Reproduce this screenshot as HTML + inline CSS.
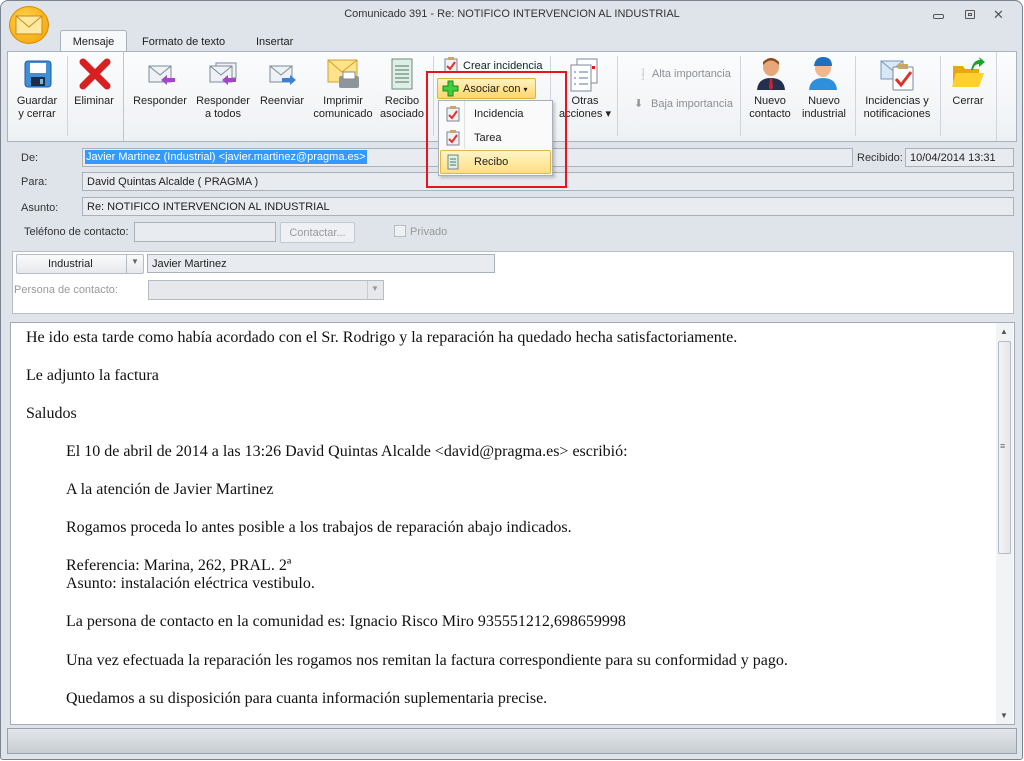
<!DOCTYPE html>
<html><head><meta charset="utf-8"><style>
*{margin:0;padding:0;box-sizing:border-box}
body{width:1024px;height:761px;background:#fff;font-family:"Liberation Sans",sans-serif;font-size:11px;color:#1e1e1e;position:relative;overflow:hidden}
.a{position:absolute}
.win{left:0;top:0;width:1023px;height:760px;background:#dfe4ea;border:1px solid #7a8491;border-radius:8px 8px 3px 3px}
.lbl{position:absolute;font-size:11px;color:#333;white-space:nowrap}
.fld{position:absolute;background:#e8ebef;border:1px solid #a9b1bb;height:19px;font-size:11px;padding:3px 4px;white-space:nowrap}
.btxt{position:absolute;text-align:center;font-size:11px;line-height:13px;color:#222;white-space:nowrap}
.sep{position:absolute;width:1px;background:#cfd5dc;top:56px;height:80px}
.p{position:absolute;font-family:"Liberation Serif",serif;font-size:16px;color:#111;white-space:nowrap}
</style></head><body>
<div class="a win"></div>
<div class="a" style="left:9px;top:6px;width:40px;height:38px;border-radius:50%;background:radial-gradient(circle at 40% 35%,#ffd24a,#f5a000);border:1px solid #d88a00"></div>
<svg class="a" style="left:15px;top:15px" width="28" height="20"><rect x="1" y="1" width="26" height="18" fill="#ffe9a0" stroke="#c98a10"/><path d="M1 1 L14 12 L27 1" fill="none" stroke="#c98a10"/></svg>
<div class="a" style="left:0;top:8px;width:1024px;text-align:center;font-size:11px;color:#333">Comunicado 391 - Re: NOTIFICO INTERVENCION AL INDUSTRIAL</div>
<div class="a" style="left:933px;top:14px;width:11px;height:5px;border:1px solid #555;border-radius:2px"></div>
<div class="a" style="left:965px;top:10px;width:10px;height:9px;border:1px solid #555;border-radius:1px"></div>
<div class="a" style="left:968px;top:13px;width:4px;height:3px;border:1px solid #555"></div>
<div class="a" style="left:993px;top:7px;font-size:13px;color:#555">✕</div>
<div class="a" style="left:60px;top:30px;width:67px;height:22px;background:#f6f8fa;border:1px solid #aab3bd;border-bottom:none;border-radius:3px 3px 0 0;text-align:center;padding-top:5px">Mensaje</div>
<div class="a" style="left:142px;top:36px">Formato de texto</div>
<div class="a" style="left:256px;top:36px">Insertar</div>
<div class="a" style="left:7px;top:51px;width:1010px;height:91px;background:linear-gradient(#fbfcfd,#eef1f4);border:1px solid #aab3bd"></div>
<div class="a" style="left:996px;top:52px;width:1px;height:89px;background:#cfd5dc"></div>
<div class="sep" style="left:67px"></div>
<div class="sep" style="left:123px;top:52px;height:89px;background:#bfc6ce"></div>
<div class="sep" style="left:433px"></div>
<div class="sep" style="left:550px"></div>
<div class="sep" style="left:617px"></div>
<div class="sep" style="left:740px"></div>
<div class="sep" style="left:855px"></div>
<div class="sep" style="left:940px"></div>
<svg class="a" style="left:24px;top:60px" width="28" height="28"><rect x="1" y="1" width="26" height="26" rx="3" fill="#3e8fd8" stroke="#1f5c9a"/><rect x="6" y="3" width="16" height="10" fill="#fff"/><rect x="7" y="17" width="14" height="9" fill="#1c2e45"/><rect x="16" y="19" width="3" height="5" fill="#7fb4e0"/></svg>
<svg class="a" style="left:79px;top:58px" width="32" height="32"><path d="M4 4 L28 28 M28 4 L4 28" stroke="#d92020" stroke-width="7" stroke-linecap="round"/></svg>
<svg class="a" style="left:147px;top:60px" width="30" height="28"><rect x="2" y="6" width="22" height="16" fill="#eef2f6" stroke="#7d8a98"/><path d="M2 6 L13 15 L24 6" fill="none" stroke="#7d8a98"/><path d="M14 20 L20 15 L20 18 L28 18 L28 22 L20 22 L20 25 Z" fill="#a245c6"/></svg>
<svg class="a" style="left:208px;top:60px" width="32" height="28"><rect x="8" y="3" width="20" height="15" fill="#eef2f6" stroke="#7d8a98"/><rect x="2" y="6" width="22" height="16" fill="#eef2f6" stroke="#7d8a98"/><path d="M2 6 L13 15 L24 6" fill="none" stroke="#7d8a98"/><path d="M14 20 L20 15 L20 18 L28 18 L28 22 L20 22 L20 25 Z" fill="#a245c6"/></svg>
<svg class="a" style="left:268px;top:60px" width="30" height="28"><rect x="2" y="6" width="22" height="16" fill="#eef2f6" stroke="#7d8a98"/><path d="M2 6 L13 15 L24 6" fill="none" stroke="#7d8a98"/><path d="M28 20 L22 15 L22 18 L14 18 L14 22 L22 22 L22 25 Z" fill="#3b7fd6"/></svg>
<svg class="a" style="left:327px;top:58px" width="34" height="34"><rect x="1" y="2" width="29" height="22" fill="#ffe38a" stroke="#d0a030"/><path d="M1 2 L15 14 L30 2" fill="none" stroke="#d0a030"/><rect x="12" y="18" width="20" height="12" rx="2" fill="#8d959e"/><rect x="16" y="14" width="12" height="7" fill="#fff" stroke="#888"/></svg>
<svg class="a" style="left:391px;top:58px" width="22" height="32"><rect x="1" y="1" width="20" height="30" fill="#dfeee6" stroke="#6a8d7a"/><path d="M4 8h14M4 12h14M4 16h14M4 20h14M4 24h14" stroke="#4b7560"/></svg>
<div class="btxt" style="left:14px;top:95px;width:46px">Guardar<br>y cerrar</div>
<div class="btxt" style="left:72px;top:95px;width:44px">Eliminar</div>
<div class="btxt" style="left:132px;top:95px;width:56px">Responder</div>
<div class="btxt" style="left:194px;top:95px;width:58px">Responder<br>a todos</div>
<div class="btxt" style="left:256px;top:95px;width:52px">Reenviar</div>
<div class="btxt" style="left:312px;top:95px;width:62px">Imprimir<br>comunicado</div>
<div class="btxt" style="left:378px;top:95px;width:48px">Recibo<br>asociado</div>
<svg class="a" style="left:444px;top:57px" width="14" height="16"><rect x="1" y="2" width="12" height="13" fill="#eef2f8" stroke="#7a8798"/><path d="M3 9 L6 12 L11 5" stroke="#e0322a" stroke-width="2" fill="none"/><rect x="4" y="0" width="6" height="3" fill="#c9a866"/></svg>
<div class="a" style="left:463px;top:60px">Crear incidencia</div>
<svg class="a" style="left:569px;top:58px" width="32" height="34"><rect x="8" y="1" width="20" height="24" fill="#fff" stroke="#7b8898"/><rect x="2" y="7" width="20" height="26" fill="#fff" stroke="#7b8898"/><path d="M5 14h2M10 14h9M5 20h2M10 20h9M5 26h2M10 26h9" stroke="#5a7aa0"/><rect x="23" y="8" width="3" height="3" fill="#d02020"/></svg>
<div class="btxt" style="left:556px;top:95px;width:58px">Otras<br>acciones ▾</div>
<div class="a" style="left:636px;top:68px;color:#999">❕</div>
<div class="a" style="left:652px;top:68px;color:#8a8f96">Alta importancia</div>
<div class="a" style="left:634px;top:97px;color:#999">⬇</div>
<div class="a" style="left:651px;top:98px;color:#8a8f96">Baja importancia</div>
<svg class="a" style="left:755px;top:56px" width="32" height="36"><ellipse cx="16" cy="11" rx="8" ry="9" fill="#e6a878"/><path d="M8 9 Q16 0 24 9 L24 6 Q16 -2 8 6Z" fill="#8a4a20"/><path d="M2 34 Q3 22 16 22 Q29 22 30 34Z" fill="#25304f"/><path d="M15 22 L17 22 L18 32 L16 34 L14 32Z" fill="#d0202a"/></svg>
<svg class="a" style="left:807px;top:56px" width="32" height="36"><ellipse cx="16" cy="12" rx="8" ry="9" fill="#f0b890"/><path d="M7 10 Q8 1 16 1 Q25 1 25 10Z" fill="#1f6fbf"/><path d="M2 34 Q3 22 16 22 Q29 22 30 34Z" fill="#2e8fdc"/></svg>
<div class="btxt" style="left:746px;top:95px;width:48px">Nuevo<br>contacto</div>
<div class="btxt" style="left:800px;top:95px;width:48px">Nuevo<br>industrial</div>
<svg class="a" style="left:879px;top:57px" width="36" height="34"><rect x="2" y="4" width="22" height="18" fill="#d8e8f6" stroke="#7a96b8"/><path d="M2 4 L13 13 L24 4" fill="none" stroke="#7a96b8"/><rect x="14" y="10" width="20" height="23" rx="1" fill="#fff" stroke="#7a8798"/><rect x="19" y="7" width="10" height="5" fill="#c9a866"/><path d="M17 22 L22 28 L32 15" stroke="#e0322a" stroke-width="3" fill="none"/></svg>
<div class="btxt" style="left:860px;top:95px;width:74px">Incidencias y<br>notificaciones</div>
<svg class="a" style="left:951px;top:56px" width="34" height="34"><path d="M2 10 L12 10 L14 13 L28 13 L28 31 L2 31Z" fill="#e8a810"/><path d="M5 17 L33 17 L28 31 L1 31Z" fill="#ffd030"/><path d="M20 14 Q22 4 29 4 L28 1 L34 6 L28 11 L28 8 Q23 8 22 14Z" fill="#1aa52a"/></svg>
<div class="btxt" style="left:945px;top:95px;width:46px">Cerrar</div>
<div class="lbl" style="left:21px;top:152px">De:</div>
<div class="fld" style="left:82px;top:148px;width:771px;padding:2px 2px"><span style="background:#3399ff;color:#fff;padding:1px 1px">Javier Martinez (Industrial) &lt;javier.martinez@pragma.es&gt;</span></div>
<div class="lbl" style="left:857px;top:152px">Recibido:</div>
<div class="fld" style="left:905px;top:148px;width:109px">10/04/2014 13:31</div>
<div class="lbl" style="left:21px;top:176px">Para:</div>
<div class="fld" style="left:82px;top:172px;width:932px">David Quintas Alcalde ( PRAGMA )</div>
<div class="lbl" style="left:21px;top:202px">Asunto:</div>
<div class="fld" style="left:82px;top:197px;width:932px">Re: NOTIFICO INTERVENCION AL INDUSTRIAL</div>
<div class="lbl" style="left:24px;top:226px">Teléfono de contacto:</div>
<div class="fld" style="left:134px;top:222px;width:142px;height:20px"></div>
<div class="a" style="left:280px;top:222px;width:75px;height:21px;border:1px solid #c4cad1;border-radius:2px;color:#999;padding-top:4px;text-align:center;background:#eef0f3">Contactar...</div>
<div class="a" style="left:394px;top:225px;width:12px;height:12px;border:1px solid #b5bcc4;background:#eef0f2"></div>
<div class="lbl" style="left:410px;top:226px;color:#999">Privado</div>
<div class="a" style="left:12px;top:251px;width:1002px;height:63px;background:#fff;border:1px solid #b7bec7"></div>
<div class="a" style="left:16px;top:254px;width:128px;height:20px;border:1px solid #b5bcc4;border-radius:2px;background:linear-gradient(#fafbfc,#e6e9ed)"></div>
<div class="a" style="left:126px;top:255px;width:1px;height:18px;background:#b5bcc4"></div>
<div class="a" style="left:48px;top:258px">Industrial</div>
<div class="a" style="left:131px;top:257px;font-size:8px;color:#666">▼</div>
<div class="fld" style="left:147px;top:254px;width:348px">Javier Martinez</div>
<div class="lbl" style="left:14px;top:284px;color:#999">Persona de contacto:</div>
<div class="a" style="left:148px;top:280px;width:236px;height:20px;border:1px solid #b5bcc4;background:#e6e8eb"></div>
<div class="a" style="left:367px;top:281px;width:1px;height:18px;background:#c8ccd1"></div>
<div class="a" style="left:371px;top:284px;font-size:8px;color:#999">▼</div>
<div class="a" style="left:10px;top:322px;width:1005px;height:403px;background:#fff;border:1px solid #a3acb6"></div>
<div class="a" style="left:996px;top:323px;width:17px;height:401px;background:#f2f3f5"></div>
<div class="a" style="left:998px;top:341px;width:13px;height:213px;border:1px solid #b4bbc4;border-radius:2px;background:linear-gradient(90deg,#f3f4f6,#e3e6ea)"></div>
<div class="a" style="left:1000px;top:441px;font-size:9px;color:#666">≡</div>
<div class="a" style="left:1000px;top:327px;font-size:8px;color:#555">▲</div>
<div class="a" style="left:1000px;top:711px;font-size:8px;color:#555">▼</div>
<div class="p" style="left:26px;top:329px">He ido esta tarde como había acordado con el Sr. Rodrigo y la reparación ha quedado hecha satisfactoriamente.</div>
<div class="p" style="left:26px;top:367px">Le adjunto la factura</div>
<div class="p" style="left:26px;top:405px">Saludos</div>
<div class="p" style="left:66px;top:443px">El 10 de abril de 2014 a las 13:26 David Quintas Alcalde &lt;david@pragma.es&gt; escribió:</div>
<div class="p" style="left:66px;top:481px">A la atención de Javier Martinez</div>
<div class="p" style="left:66px;top:519px">Rogamos proceda lo antes posible a los trabajos de reparación abajo indicados.</div>
<div class="p" style="left:66px;top:557px">Referencia: Marina, 262, PRAL. 2ª</div>
<div class="p" style="left:66px;top:575px">Asunto: instalación eléctrica vestibulo.</div>
<div class="p" style="left:66px;top:613px">La persona de contacto en la comunidad es: Ignacio Risco Miro 935551212,698659998</div>
<div class="p" style="left:66px;top:652px">Una vez efectuada la reparación les rogamos nos remitan la factura correspondiente para su conformidad y pago.</div>
<div class="p" style="left:66px;top:690px">Quedamos a su disposición para cuanta información suplementaria precise.</div>
<div class="a" style="left:7px;top:728px;width:1010px;height:26px;border:1px solid #98a1ab;background:linear-gradient(#e3e7eb,#c8cdd3)"></div>
<div class="a" style="left:426px;top:71px;width:141px;height:117px;border:2px solid #e8141c"></div>
<div class="a" style="left:437px;top:78px;width:99px;height:21px;border:1px solid #e0b040;border-radius:2px;background:linear-gradient(#fff3c0,#ffd66a)"></div>
<svg class="a" style="left:442px;top:80px" width="17" height="17"><path d="M6 1h5v5h5v5h-5v5H6v-5H1V6h5z" fill="#3ecf3e" stroke="#1a8a1a"/></svg>
<div class="a" style="left:463px;top:83px">Asociar con <span style="font-size:8px">▾</span></div>
<div class="a" style="left:438px;top:100px;width:115px;height:76px;background:#fafafa;border:1px solid #a8b0ba;box-shadow:2px 2px 3px rgba(0,0,0,.2)"></div>
<div class="a" style="left:464px;top:101px;width:1px;height:48px;background:#e0e0e0"></div>
<svg class="a" style="left:446px;top:106px" width="14" height="16"><rect x="1" y="2" width="12" height="13" fill="#eef2f8" stroke="#7a8798"/><path d="M3 9 L6 12 L11 5" stroke="#e0322a" stroke-width="2" fill="none"/><rect x="4" y="0" width="6" height="3" fill="#c9a866"/></svg>
<div class="a" style="left:474px;top:108px">Incidencia</div>
<svg class="a" style="left:446px;top:130px" width="14" height="16"><rect x="1" y="2" width="12" height="13" fill="#eef2f8" stroke="#7a8798"/><path d="M3 9 L6 12 L11 5" stroke="#e0322a" stroke-width="2" fill="none"/><rect x="4" y="0" width="6" height="3" fill="#c9a866"/></svg>
<div class="a" style="left:474px;top:132px">Tarea</div>
<div class="a" style="left:440px;top:150px;width:111px;height:24px;border:1px solid #e3b64a;border-radius:2px;background:linear-gradient(#fff4c8,#ffdf80)"></div>
<svg class="a" style="left:447px;top:154px" width="12" height="16"><rect x="1" y="1" width="10" height="14" fill="#dfeee6" stroke="#6a8d7a"/><path d="M3 5h6M3 8h6M3 11h6" stroke="#4b7560"/></svg>
<div class="a" style="left:474px;top:156px">Recibo</div>
</body></html>
